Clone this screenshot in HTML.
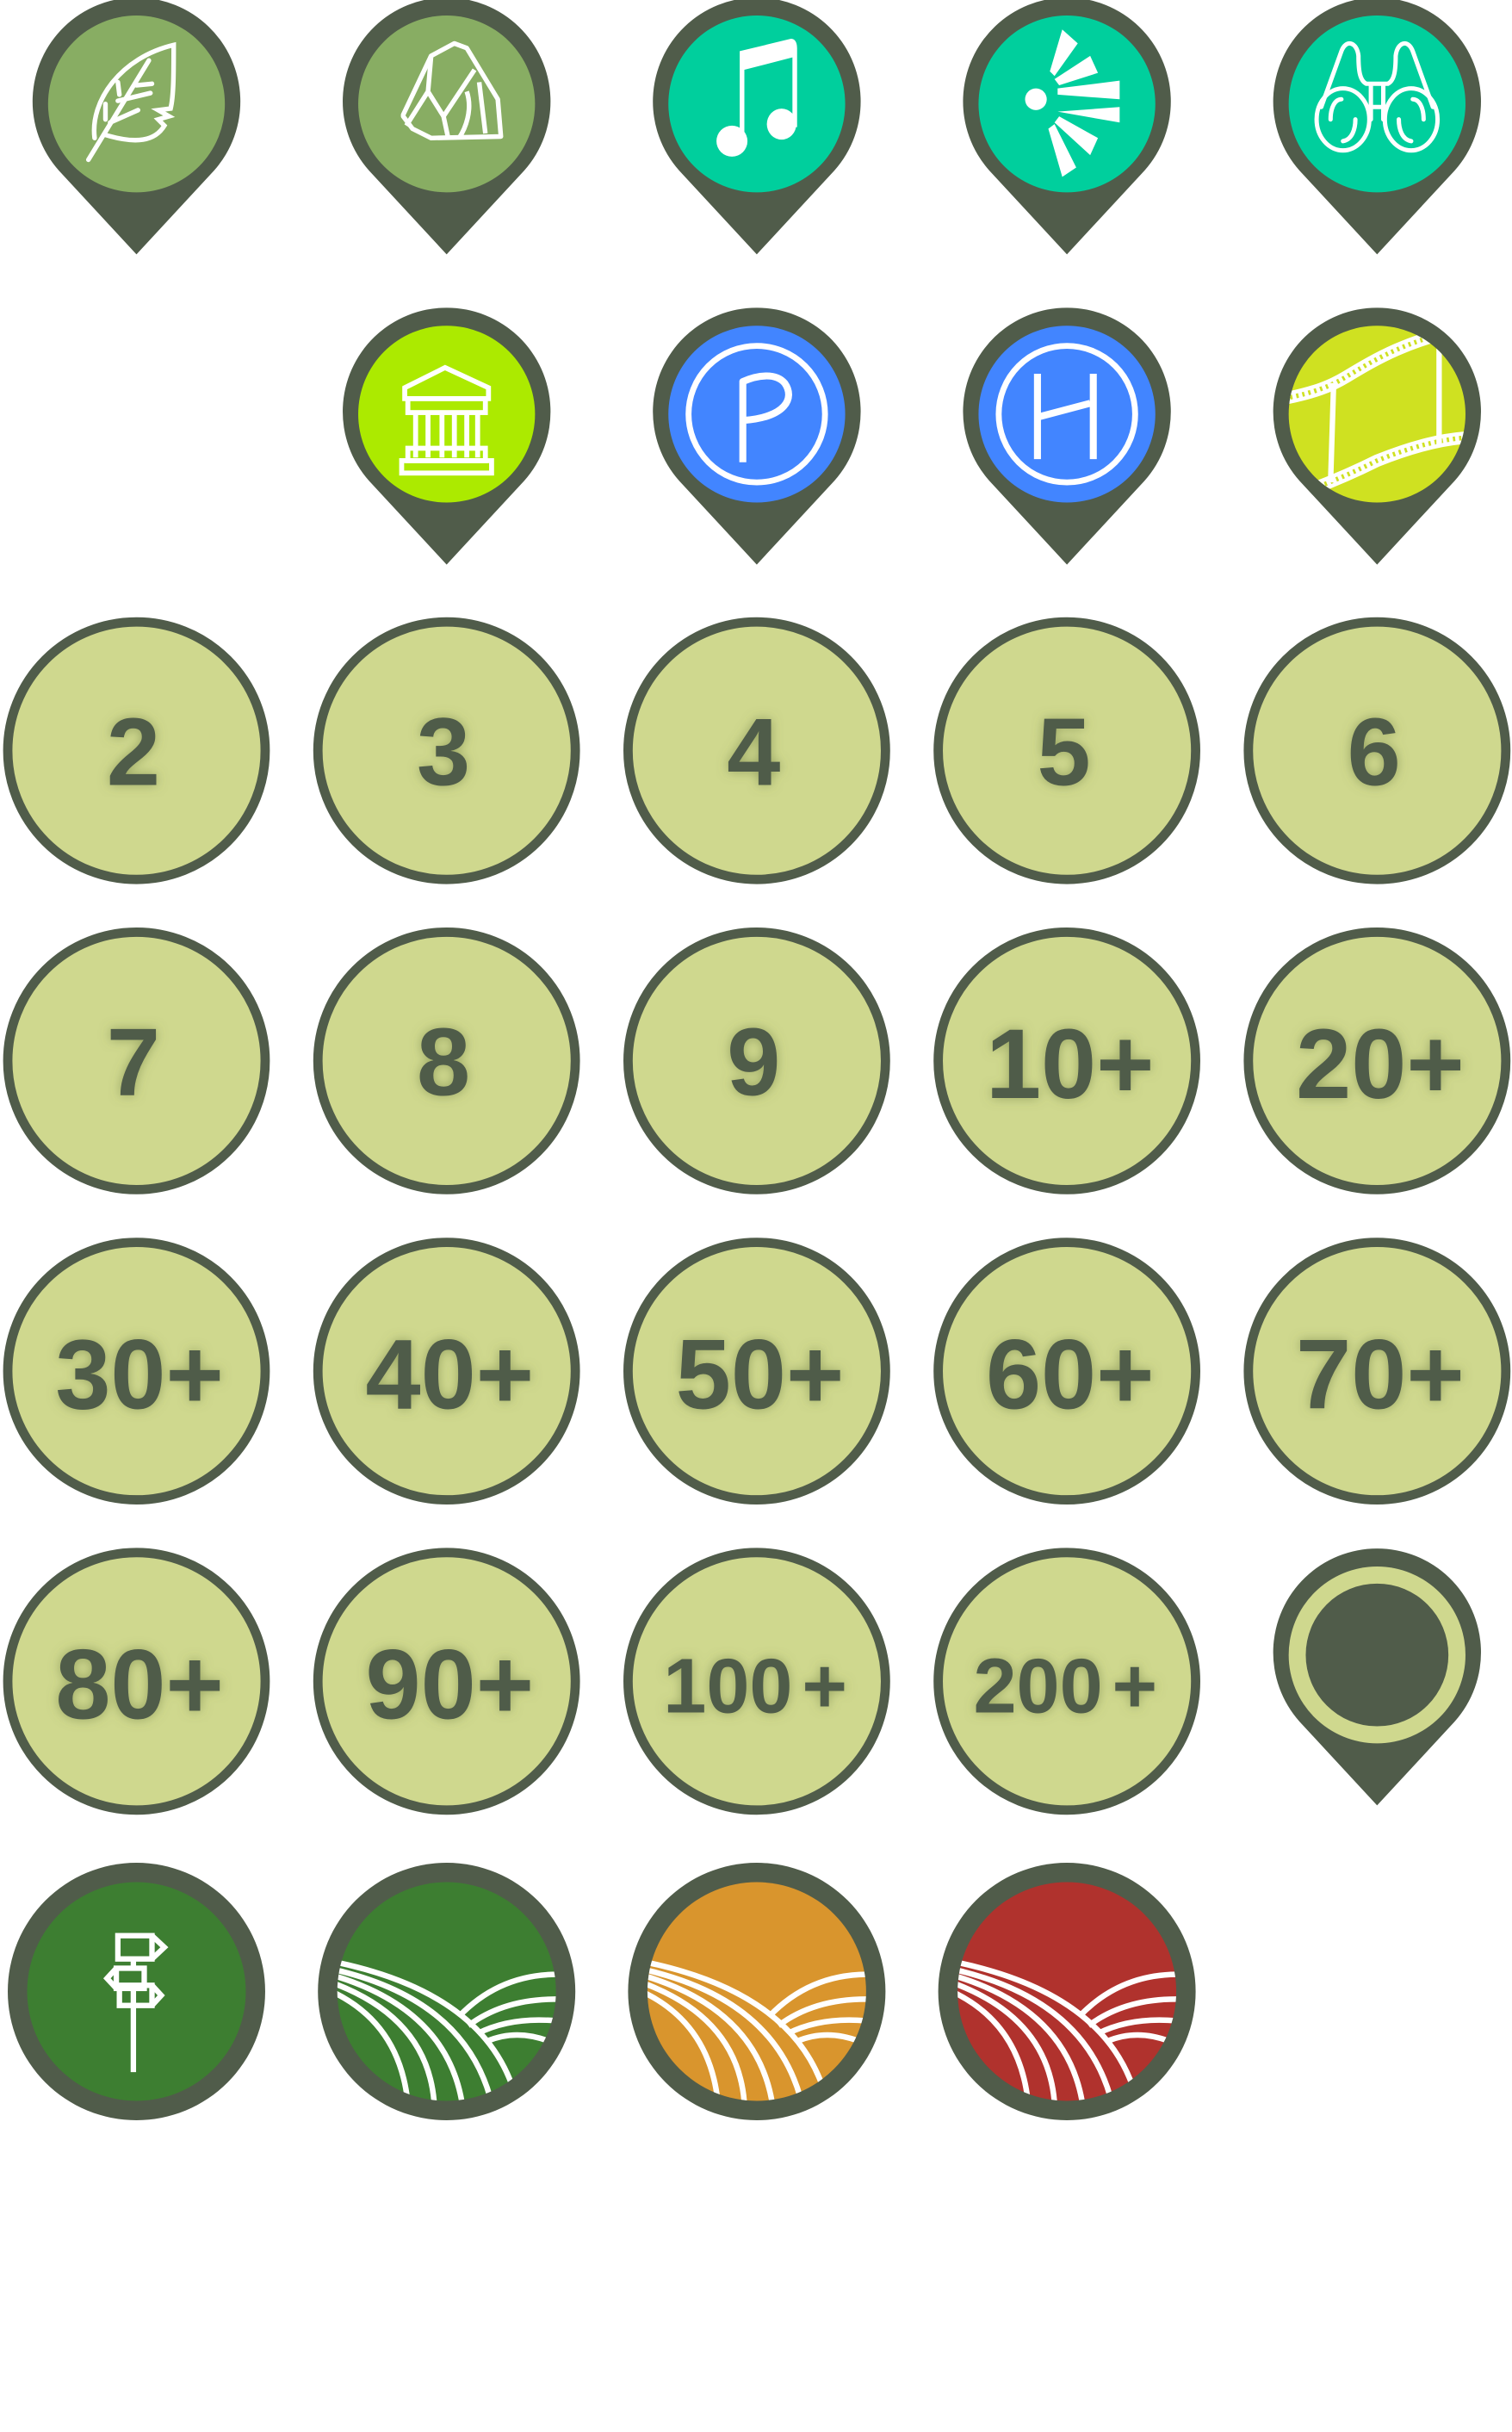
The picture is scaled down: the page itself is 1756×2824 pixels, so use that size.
<!DOCTYPE html>
<html><head><meta charset="utf-8"><style>
html,body{margin:0;padding:0;background:#fff;}
svg{display:block;}
.n{font-family:"Liberation Sans",sans-serif;font-weight:bold;fill:#4f5b4a;text-anchor:middle;}
</style></head><body>
<svg width="1756" height="2824" viewBox="0 0 975 1568" preserveAspectRatio="none" xmlns="http://www.w3.org/2000/svg">
<defs>
<filter id="gl" x="-30%" y="-30%" width="160%" height="160%">
<feGaussianBlur in="SourceAlpha" stdDeviation="3.5" result="b"/>
<feFlood flood-color="#6a7a40" flood-opacity="0.55"/>
<feComposite in2="b" operator="in" result="s"/>
<feMerge><feMergeNode in="s"/><feMergeNode in="SourceGraphic"/></feMerge>
</filter>
<path id="pin" d="M0,97 L-50,43 A67,67 0 1 1 50,43 Z" fill="#505c4a"/>
<clipPath id="cc"><circle r="70.5"/></clipPath>
<clipPath id="pc"><circle r="57"/></clipPath>
</defs>

<g transform="translate(88,67)"><use href="#pin"/><circle r="57" fill="#88ad63"/>
<g fill="none" stroke="#fff" stroke-width="3" stroke-linecap="round">
<path d="M-31,36 L8,-28"/>
<path d="M-27,22 C-30,-2 -10,-30 24,-38 C24,-20 24,-5 22,3 L14,4 L21,8 L14,10 L18,14 C12,24 0,26 -20,20"/>
<path d="M-12,-2 L9,-7 M-17,12 L1,4 M0,-12 L10,-13 M-20,0 L-20,10 M-12,-14 L-11,-6"/>
</g></g>
<g transform="translate(288,67)"><use href="#pin"/><circle r="57" fill="#88ad63"/>
<g fill="none" stroke="#fff" stroke-width="3" stroke-linejoin="round">
<path d="M-28,7 L-10,-31 L5,-39 L13,-36 L33,-3 L35,21 L-10,22 L-22,16 L-28,8 Z"/>
<path d="M-10,-31 L-12,-8 L-2,8 L18,-22 M-2,8 L1,22 M-12,-8 L-26,14"/>
<path d="M21,-14 L25,19 M13,-8 C17,4 12,16 8,22"/>
</g></g>
<g transform="translate(488,67)"><use href="#pin"/><circle r="57" fill="#00cf9d"/>
<g fill="#fff">
<path d="M-11,-34 L22,-42 C25,-42 26,-39 26,-36 L26,15 L23,15 L23,-30 L-8,-22 L-8,25 L-11,25 Z"/>
<ellipse cx="-16" cy="24" rx="10" ry="10"/><ellipse cx="16" cy="13" rx="9.5" ry="10"/>
</g></g>
<g transform="translate(688,67)"><use href="#pin"/><circle r="57" fill="#00cf9d"/>
<g fill="#fff">
<ellipse cx="-20" cy="-3" rx="7" ry="7"/>
<path d="M-6,-10 L34,-15 L34,-3 L-6,-6 Z"/>
<path d="M-6,2 L34,9 L34,-1 Z" transform="translate(0,3)"/>
<path d="M-8,-16 L15,-31 L20,-20 L-5,-12 Z"/>
<path d="M-11,-21 L-3,-48 L7,-39 L-8,-18 Z"/>
<path d="M-5,8 L20,22 L15,33 L-8,12 Z"/>
<path d="M-8,13 L6,41 L-3,47 L-12,16 Z"/>
</g></g>
<g transform="translate(888,67)"><use href="#pin"/><circle r="57" fill="#00cf9d"/>
<g fill="none" stroke="#fff" stroke-width="2.8" stroke-linecap="round">
<ellipse cx="-22" cy="10" rx="17" ry="20"/><ellipse cx="22" cy="10" rx="17" ry="20"/>
<path d="M-36,2 L-23,-34 C-20,-42 -13,-40 -12,-31 C-12,-21 -11,-15 -7,-13 L7,-13 C11,-15 12,-21 12,-31 C13,-40 20,-42 23,-34 L36,2"/>
<path d="M-4,-12 L-4,10 M4,-12 L4,10 M-6,2 L6,2"/>
<path d="M-30,10 C-30,2 -27,-3 -23,-3 M-22,24 C-16,23 -14,16 -14,10 M30,10 C30,2 27,-3 23,-3 M22,24 C16,23 14,16 14,10"/>
</g></g>

<g transform="translate(288,267)"><use href="#pin"/><circle r="57" fill="#acea00"/>
<g fill="none" stroke="#fff" stroke-width="3.2">
<path d="M-27,-17 L-1,-30 L27,-17 L27,-10 L-27,-10 Z"/>
<rect x="-25" y="-10" width="50" height="9"/>
<path d="M-20,-1 V28 M-12,-1 V28 M-3,-1 V28 M5,-1 V28 M13,-1 V28 M20,-1 V28"/>
<rect x="-25" y="22" width="50" height="8"/><rect x="-29" y="30" width="58" height="8"/>
</g></g>
<g transform="translate(488,267)"><use href="#pin"/><circle r="57" fill="#4285ff"/>
<circle r="44" fill="none" stroke="#fff" stroke-width="3.8"/>
<path d="M-9,31 L-9,-21 C0,-25 12,-27 18,-20 C25,-10 18,2 -8,4" fill="none" stroke="#fff" stroke-width="4.5" stroke-linejoin="round"/>
</g>
<g transform="translate(688,267)"><use href="#pin"/><circle r="57" fill="#4285ff"/>
<circle r="44" fill="none" stroke="#fff" stroke-width="3.8"/>
<path d="M-19,-26 V29 M17,-26 V29 M-19,2 L15,-7" fill="none" stroke="#fff" stroke-width="4.5"/>
</g>
<g transform="translate(888,267)"><use href="#pin"/><circle r="57" fill="#cfe121"/>
<g clip-path="url(#pc)"><g fill="none" stroke="#fff">
<path d="M-60,-10 C-40,-14 -30,-18 -20,-24 C0,-36 20,-48 60,-56" stroke-width="8"/>
<path d="M-60,-10 C-40,-14 -30,-18 -20,-24 C0,-36 20,-48 60,-56" stroke="#cfe121" stroke-width="3" stroke-dasharray="1.5 2.5"/>
<path d="M-60,55 C-40,48 -20,40 0,30 C20,22 40,16 60,15" stroke-width="8"/>
<path d="M-60,55 C-40,48 -20,40 0,30 C20,22 40,16 60,15" stroke="#cfe121" stroke-width="3" stroke-dasharray="1.5 2.5"/>
<path d="M-28,-20 L-30,44 M40,-46 L40,20" stroke-width="3.5"/>
</g></g></g>

<g fill="#cfd88e" stroke="#505c4a" stroke-width="6">
<circle cx="88" cy="484" r="83"/><circle cx="288" cy="484" r="83"/><circle cx="488" cy="484" r="83"/><circle cx="688" cy="484" r="83"/><circle cx="888" cy="484" r="83"/>
<circle cx="88" cy="684" r="83"/><circle cx="288" cy="684" r="83"/><circle cx="488" cy="684" r="83"/><circle cx="688" cy="684" r="83"/><circle cx="888" cy="684" r="83"/>
<circle cx="88" cy="884" r="83"/><circle cx="288" cy="884" r="83"/><circle cx="488" cy="884" r="83"/><circle cx="688" cy="884" r="83"/><circle cx="888" cy="884" r="83"/>
<circle cx="88" cy="1084" r="83"/><circle cx="288" cy="1084" r="83"/><circle cx="488" cy="1084" r="83"/><circle cx="688" cy="1084" r="83"/>
</g>
<g class="n" font-size="62" filter="url(#gl)">
<text x="86" y="506">2</text><text x="286" y="506">3</text><text x="486" y="506">4</text><text x="686" y="506">5</text><text x="886" y="506">6</text>
<text x="86" y="706">7</text><text x="286" y="706">8</text><text x="486" y="706">9</text>
<text x="690" y="708" font-size="64">10+</text><text x="890" y="708" font-size="64">20+</text>
<text x="90" y="908" font-size="64">30+</text><text x="290" y="908" font-size="64">40+</text><text x="490" y="908" font-size="64">50+</text><text x="690" y="908" font-size="64">60+</text><text x="890" y="908" font-size="64">70+</text>
<text x="90" y="1108" font-size="64">80+</text><text x="290" y="1108" font-size="64">90+</text>
<text x="487" y="1104" font-size="50">100<tspan dx="6">+</tspan></text><text x="687" y="1104" font-size="50">200<tspan dx="6">+</tspan></text>
</g>

<g transform="translate(888,1067)"><use href="#pin"/><circle r="57" fill="#cfd88e"/><circle r="46" fill="#505c4a"/></g>

<g transform="translate(88,1284)"><circle r="83" fill="#505c4a"/><circle r="70.5" fill="#3d7e31"/>
<g fill="none" stroke="#fff" stroke-width="3.5">
<path d="M-2,52 V-4"/>
<rect x="-11" y="-4" width="21" height="13"/><path d="M10,-4 L16,2.5 L10,9"/>
<rect x="-12" y="-36" width="22" height="15"/><path d="M10,-36 L18,-28.5 L10,-21"/>
<path d="M-2,-21 V-15"/>
<rect x="-13" y="-15" width="18" height="13"/><path d="M-13,-15 L-19,-8.5 L-13,-2"/>
</g></g>
<g transform="translate(288,1284)"><circle r="83" fill="#505c4a"/><circle r="70.5" fill="#3d7e31"/>
<g clip-path="url(#cc)" fill="none" stroke="#fff" stroke-width="3.6">
<path d="M-72,-19 Q20,0 42,60"/><path d="M-72,-14 Q10,5 28,68"/><path d="M-72,-10 Q0,12 10,72"/><path d="M-72,-5 Q-12,18 -8,72"/><path d="M-72,1 Q-30,22 -25,72"/>
<path d="M8,16 Q35,-12 74,-11"/><path d="M14,22 Q38,4 74,5"/><path d="M20,27 Q42,16 72,19"/><path d="M26,32 Q45,24 66,32"/>
</g></g>
<g transform="translate(488,1284)"><circle r="83" fill="#505c4a"/><circle r="70.5" fill="#d9952d"/>
<g clip-path="url(#cc)" fill="none" stroke="#fff" stroke-width="3.6">
<path d="M-72,-19 Q20,0 42,60"/><path d="M-72,-14 Q10,5 28,68"/><path d="M-72,-10 Q0,12 10,72"/><path d="M-72,-5 Q-12,18 -8,72"/><path d="M-72,1 Q-30,22 -25,72"/>
<path d="M8,16 Q35,-12 74,-11"/><path d="M14,22 Q38,4 74,5"/><path d="M20,27 Q42,16 72,19"/><path d="M26,32 Q45,24 66,32"/>
</g></g>
<g transform="translate(688,1284)"><circle r="83" fill="#505c4a"/><circle r="70.5" fill="#b0322d"/>
<g clip-path="url(#cc)" fill="none" stroke="#fff" stroke-width="3.6">
<path d="M-72,-19 Q20,0 42,60"/><path d="M-72,-14 Q10,5 28,68"/><path d="M-72,-10 Q0,12 10,72"/><path d="M-72,-5 Q-12,18 -8,72"/><path d="M-72,1 Q-30,22 -25,72"/>
<path d="M8,16 Q35,-12 74,-11"/><path d="M14,22 Q38,4 74,5"/><path d="M20,27 Q42,16 72,19"/><path d="M26,32 Q45,24 66,32"/>
</g></g>
</svg>
</body></html>
